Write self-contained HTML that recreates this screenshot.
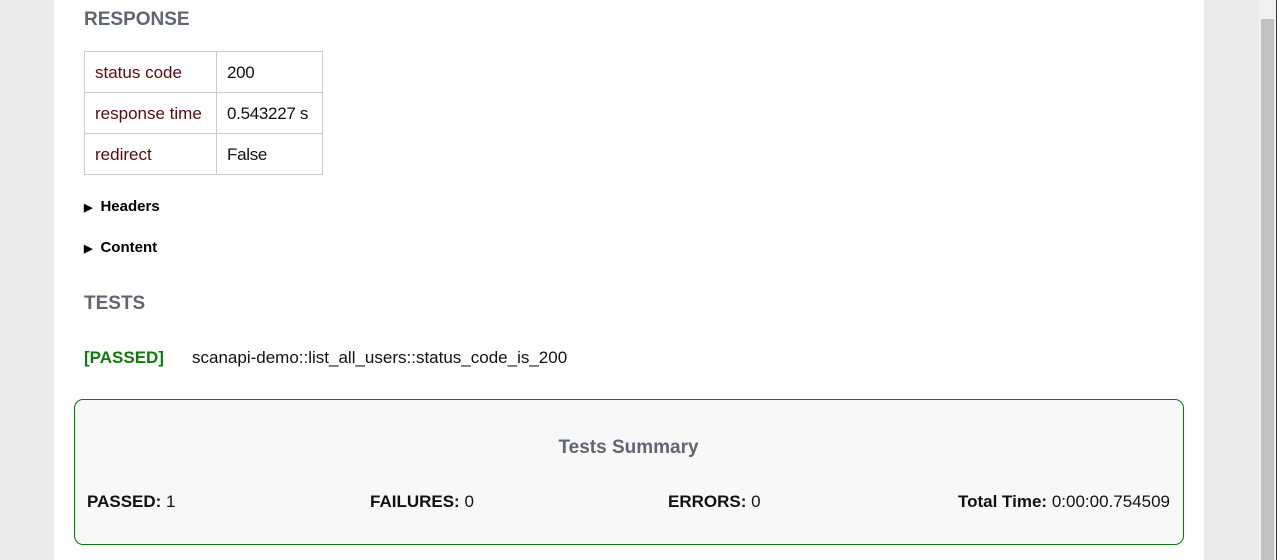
<!DOCTYPE html>
<html><head><meta charset="utf-8"><style>
body{margin:0;width:1277px;height:560px;background:#ebebeb;font-family:"Liberation Sans",sans-serif;position:relative;overflow:hidden;color:#111}
.main{position:absolute;left:54px;top:0;width:1150px;height:560px;background:#fff}
.a{position:absolute;white-space:nowrap}
h2{position:absolute;margin:0;font-size:19px;font-weight:bold;color:#5f6670;left:84px}
table{position:absolute;left:84px;top:51px;border-collapse:collapse;font-size:17px;table-layout:fixed;width:238px}
td{border:1px solid #ccc;height:41px;padding:2px 10px 0;box-sizing:border-box;white-space:nowrap;overflow:hidden}
td.k{color:#5a0a0a;width:132px}
td.v{width:106px;letter-spacing:-0.3px}
.tri{font-size:11px;margin-right:8px}
.box{position:absolute;left:74px;top:399px;width:1108px;height:144px;border:1px solid #008000;border-radius:9px;background:#f8f8f8}
.sb{position:absolute;left:1259px;top:0;width:17px;height:560px;background:#f0f0f0}
.th{position:absolute;left:1261px;top:19px;width:13px;height:541px;background:#c1c1c1}
</style></head><body>
<div class="main"></div>
<h2 style="top:9px">RESPONSE</h2>
<table>
<tr><td class="k">status code</td><td class="v">200</td></tr>
<tr><td class="k">response time</td><td class="v">0.543227 s</td></tr>
<tr><td class="k">redirect</td><td class="v">False</td></tr>
</table>
<div class="a" style="left:84px;top:198px;font-size:15px;font-weight:bold;color:#000"><span class="tri">▶</span>Headers</div>
<div class="a" style="left:84px;top:239px;font-size:15px;font-weight:bold;color:#000"><span class="tri">▶</span>Content</div>
<h2 style="top:293px">TESTS</h2>
<div class="a" style="left:84px;top:348px;font-size:17px;font-weight:bold;color:#0a7d0a">[PASSED]</div>
<div class="a" style="left:192px;top:348px;font-size:17px">scanapi-demo::list_all_users::status_code_is_200</div>
<div class="box"></div>
<div class="a" style="left:0;width:1257px;text-align:center;top:437px;font-size:19px;font-weight:bold;color:#5f6670">Tests Summary</div>
<div class="a" style="left:87px;top:492px;font-size:17px"><b>PASSED:</b> 1</div>
<div class="a" style="left:370px;top:492px;font-size:17px"><b>FAILURES:</b> 0</div>
<div class="a" style="left:668px;top:492px;font-size:17px"><b>ERRORS:</b> 0</div>
<div class="a" style="right:107px;top:492px;font-size:17px"><b>Total Time:</b> 0:00:00.754509</div>
<div class="sb"></div><div class="th"></div>
<div style="position:absolute;left:1276px;top:0;width:1px;height:560px;background:#333"></div>
</body></html>
